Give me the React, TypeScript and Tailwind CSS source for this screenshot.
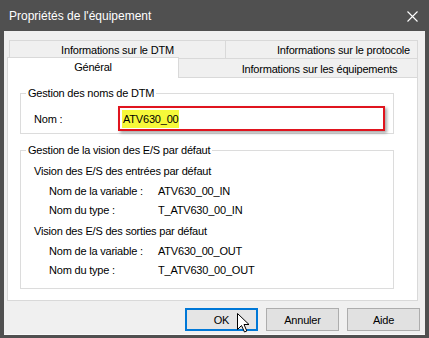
import React from 'react';

const DataRow = ({ label, value, h }: { label: string; value: string; h: string }) => (
  <div className={`flex items-center ml-[23px] ${h}`}>
    <span className="w-[109px]">{label}</span>
    <span>{value}</span>
  </div>
);

function Section({ title, varName, typeName }: { title: string; varName: string; typeName: string }) {
  return (
    <div>
      <div className="h-[20px] flex items-center ml-[8px]">{title}</div>
      <DataRow label="Nom de la variable :" value={varName} h="h-[20px]" />
      <DataRow label="Nom du type :" value={typeName} h="h-[18px]" />
    </div>
  );
}

export default function App() {
  return (
    <div className="relative w-[429px] h-[338px] bg-[#505050] flex flex-col font-['Liberation_Sans',Arial,sans-serif] text-[11px] tracking-[-0.2px] leading-[14px] text-black overflow-hidden">
      {/* Title bar */}
      <div className="h-[31px] shrink-0 flex items-center justify-between pl-[9px] pr-[11px] text-white text-[12px] tracking-normal">
        <span>Propriétés de l'équipement</span>
        <svg width="11" height="11" viewBox="0 0 11 11" className="mt-[1px]">
          <path d="M0.5 0.5 L10.5 10.5 M10.5 0.5 L0.5 10.5" stroke="#ffffff" strokeWidth="1.1" />
        </svg>
      </div>

      {/* Client area */}
      <div className="flex-1 mx-[4px] mb-[3px] bg-[#f0f0f0] flex flex-col pl-[3px] pr-[5px] pt-[9px] border-b border-[#fafafa]">
        {/* Tabs */}
        <div className="flex ml-[2px] mr-[2px] h-[18px]">
          <div className="w-[217px] border border-b-0 border-[#d9d9d9] flex items-center justify-center">
            Informations sur le DTM
          </div>
          <div className="flex-1 border border-b-0 border-l-0 border-[#d9d9d9] flex items-center justify-center pl-[44px]">
            Informations sur le protocole
          </div>
        </div>
        <div className="flex h-[19px] mr-[2px]">
          <div className="relative z-10 w-[172px] h-[21px] -mt-[1px] bg-white border border-b-0 border-[#d9d9d9] flex items-start justify-center pt-[2px]">
            Général
          </div>
          <div className="flex-1 border-t border-r border-[#d9d9d9] flex items-center justify-center pl-[43px] pt-[2px]">
            Informations sur les équipements
          </div>
        </div>

        {/* Panel */}
        <div className="h-[224px] mr-[2px] bg-white border border-[#d9d9d9] pt-[8px] pl-[12px]">
          <fieldset className="w-[374px] border border-[#dcdcdc] pl-[5px] pb-[2px]">
            <legend className="px-[2px]">Gestion des noms de DTM</legend>
            <div className="flex items-center mt-[6px]">
              <span className="ml-[8px] w-[84px]">Nom :</span>
              <div className="w-[267px] h-[25px] border-2 border-[#e0141e] bg-white shadow-[2px_2px_3px_rgba(0,0,0,0.35)] flex items-center pl-[2px]">
                <span className="bg-[#f6f93a] px-[1px] py-[2px]">ATV630_00</span>
              </div>
            </div>
          </fieldset>

          <fieldset className="w-[374px] mt-[9px] border border-[#dcdcdc] pl-[5px] pb-[9px]">
            <legend className="px-[2px]">Gestion de la vision des E/S par défaut</legend>
            <div className="mt-[4px]">
              <Section
                title="Vision des E/S des entrées par défaut"
                varName="ATV630_00_IN"
                typeName="T_ATV630_00_IN"
              />
              <div className="mt-[2px]">
                <Section
                  title="Vision des E/S des sorties par défaut"
                  varName="ATV630_00_OUT"
                  typeName="T_ATV630_00_OUT"
                />
              </div>
            </div>
          </fieldset>
        </div>

        {/* Buttons */}
        <div className="flex justify-end gap-[8px] mt-[7px]">
          <button className="w-[73px] h-[23px] bg-[#e5e5e5] border-2 border-[#0078d7] flex items-center justify-center">
            OK
          </button>
          <button className="w-[73px] h-[23px] bg-[#e1e1e1] border border-[#adadad] flex items-center justify-center">
            Annuler
          </button>
          <button className="w-[73px] h-[23px] bg-[#e1e1e1] border border-[#adadad] flex items-center justify-center">
            Aide
          </button>
        </div>
      </div>

      {/* Mouse cursor over OK */}
      <svg
        className="absolute left-[237px] top-[313px]"
        width="13"
        height="20"
        viewBox="0 0 13 20"
      >
        <path
          d="M0.5 0.5 L0.5 16.5 L4.5 12.5 L7.5 19 L9.8 18 L7 11.5 L12 11.5 Z"
          fill="#ffffff"
          stroke="#000000"
          strokeWidth="1"
          strokeLinejoin="miter"
        />
      </svg>
    </div>
  );
}
